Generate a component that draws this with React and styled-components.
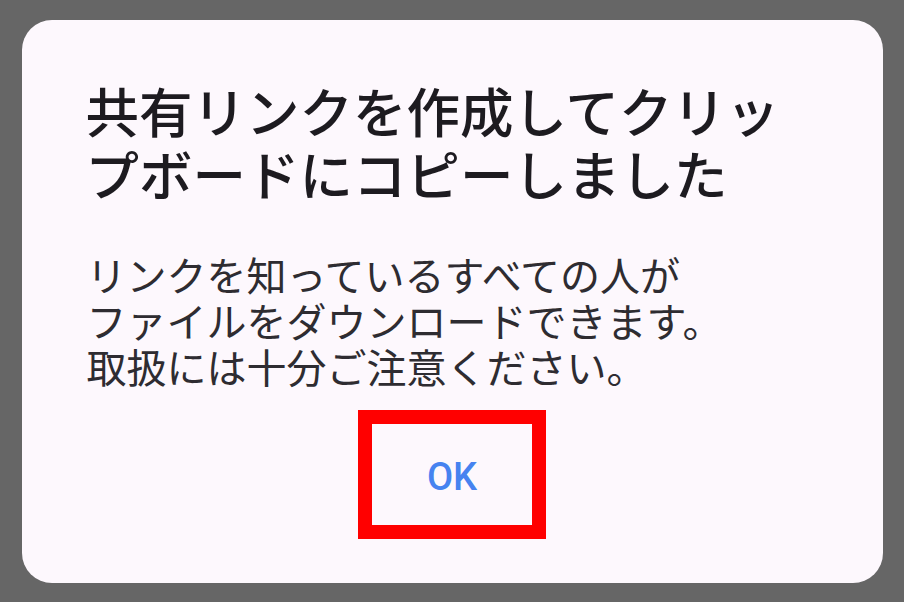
import styled, { createGlobalStyle } from "styled-components";

const GlobalStyle = createGlobalStyle`
  html, body {
    margin: 0;
    padding: 0;
    background: #666666;
  }
  body {
    font-family: "Noto Sans CJK JP", "Noto Sans", sans-serif;
  }
`;

const Screen = styled.div`
  width: 904px;
  height: 602px;
  display: flex;
  align-items: center;
  justify-content: center;
  background: #666666;
`;

const Dialog = styled.div`
  width: 861px;
  box-sizing: border-box;
  padding: 58px 64px 44px 64px;
  background: #fdf8fd;
  border-radius: 30px;
  display: flex;
  flex-direction: column;
`;

const Title = styled.h2`
  margin: 0;
  font-family: "Noto Sans CJK JP Medium", "Noto Sans CJK JP", sans-serif;
  font-size: 53.5px;
  line-height: 63px;
  font-weight: 500;
  color: #1d1b20;
`;

const Message = styled.p`
  margin: 47px 0 0 1px;
  font-size: 40px;
  line-height: 46px;
  font-weight: 400;
  color: #2e2c31;
`;

const Actions = styled.div`
  display: flex;
  justify-content: center;
  margin-top: 21px;
`;

const OkButton = styled.button`
  width: 188px;
  height: 129px;
  box-sizing: border-box;
  border: 14px solid #ff0000;
  padding: 5px 0 0;
  background: transparent;
  color: #4683f0;
  font-family: Roboto, "Noto Sans", sans-serif;
  font-weight: 500;
  font-size: 38px;
  cursor: pointer;
`;

export default function App() {
  return (
    <Screen>
      <GlobalStyle />
      <Dialog>
        <Title>共有リンクを作成してクリップボードにコピーしました</Title>
        <Message>
          リンクを知っているすべての人が
          <br />
          ファイルをダウンロードできます。
          <br />
          取扱には十分ご注意ください。
        </Message>
        <Actions>
          <OkButton>OK</OkButton>
        </Actions>
      </Dialog>
    </Screen>
  );
}
